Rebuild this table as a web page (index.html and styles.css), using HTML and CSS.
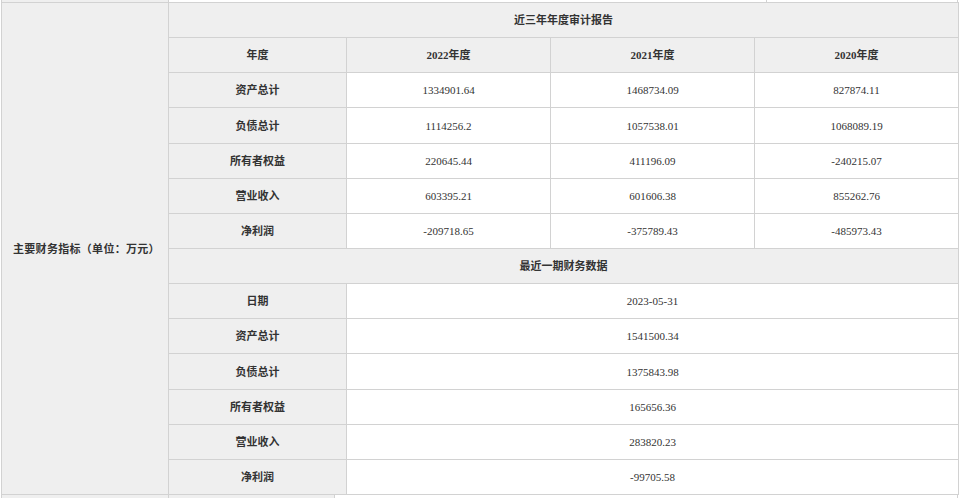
FILE: index.html
```html
<!DOCTYPE html>
<html lang="zh-CN">
<head>
<meta charset="utf-8">
<title>主要财务指标</title>
<link rel="stylesheet" href="styles.css">
</head>
<body>
<div class="page">
  <div class="strip strip-top">
    <div class="sc sc-a"></div>
    <div class="sc sc-b"></div>
    <div class="sc sc-c"></div>
  </div>
  <table class="fin">
    <colgroup>
      <col class="c1"><col class="c2"><col class="c3"><col class="c4"><col class="c5">
    </colgroup>
    <tbody>
      <tr>
        <th class="main" rowspan="14">主要财务指标（单位：万元）</th>
        <th class="hd" colspan="4">近三年年度审计报告</th>
      </tr>
      <tr>
        <th>年度</th><th>2022年度</th><th>2021年度</th><th>2020年度</th>
      </tr>
      <tr><th>资产总计</th><td>1334901.64</td><td>1468734.09</td><td>827874.11</td></tr>
      <tr class="tall"><th>负债总计</th><td>1114256.2</td><td>1057538.01</td><td>1068089.19</td></tr>
      <tr><th>所有者权益</th><td>220645.44</td><td>411196.09</td><td>-240215.07</td></tr>
      <tr><th>营业收入</th><td>603395.21</td><td>601606.38</td><td>855262.76</td></tr>
      <tr><th>净利润</th><td>-209718.65</td><td>-375789.43</td><td>-485973.43</td></tr>
      <tr><th class="hd" colspan="4">最近一期财务数据</th></tr>
      <tr><th>日期</th><td colspan="3">2023-05-31</td></tr>
      <tr><th>资产总计</th><td colspan="3">1541500.34</td></tr>
      <tr class="tall"><th>负债总计</th><td colspan="3">1375843.98</td></tr>
      <tr><th>所有者权益</th><td colspan="3">165656.36</td></tr>
      <tr><th>营业收入</th><td colspan="3">283820.23</td></tr>
      <tr><th>净利润</th><td colspan="3">-99705.58</td></tr>
    </tbody>
  </table>
  <div class="strip strip-bottom">
    <div class="sc sc-d"></div>
    <div class="sc sc-e"></div>
    <div class="sc sc-f"></div>
  </div>
</div>
</body>
</html>
```
FILE: styles.css
```css
html, body {
  margin: 0;
  padding: 0;
  background: #ffffff;
}
body {
  font-family: "Liberation Serif", "Noto Sans CJK SC", serif;
  color: #333333;
}
.page {
  width: 960px;
  height: 498px;
  overflow: hidden;
  padding-left: 1px;
  box-sizing: border-box;
}
.strip {
  display: flex;
  width: 957px;
}
.strip-top {
  height: 2px;
}
.strip-bottom {
  height: 10px;
}
.sc {
  box-sizing: border-box;
  border-left: 1px solid #d2d2d2;
}
.sc-a { width: 167px; background: #efefef; }
.sc-b { width: 598px; background: #ffffff; }
.sc-c { width: 192px; border-right: 1px solid #d2d2d2; }
.sc-d { width: 167px; background: #efefef; }
.sc-e { width: 166px; background: #efefef; }
.sc-f { flex: 1; border-right: 1px solid #d2d2d2; }
.fin {
  border-collapse: collapse;
  table-layout: fixed;
  width: 957px;
}
.c1 { width: 167px; }
.c2 { width: 178px; }
.c3 { width: 204px; }
.c4 { width: 204px; }
.c5 { width: 204px; }
.fin th,
.fin td {
  border: 1px solid #d2d2d2;
  height: 34px;
  padding: 0;
  text-align: center;
  vertical-align: middle;
  font-size: 11px;
  line-height: 14px;
}
.fin tr.tall th,
.fin tr.tall td {
  height: 35px;
}
.fin th {
  background: #efefef;
  font-weight: bold;
}
.fin td {
  background: #ffffff;
  font-weight: normal;
}
.fin th.main {
  text-align: left;
  padding-left: 11px;
  letter-spacing: 0.3px;
}
```
